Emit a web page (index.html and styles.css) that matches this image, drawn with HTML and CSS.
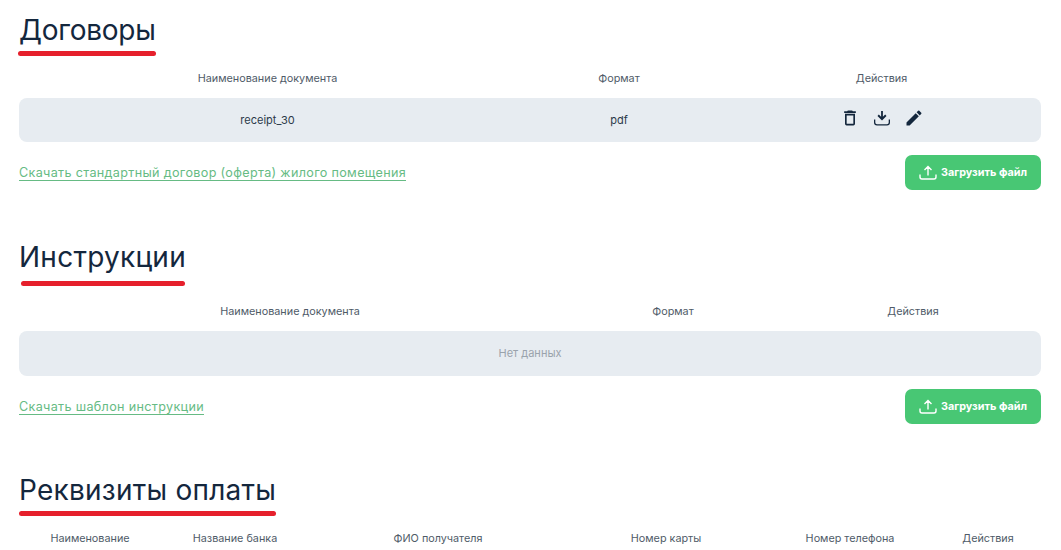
FILE: index.html
```html
<!DOCTYPE html>
<html lang="ru">
<head>
<meta charset="utf-8">
<title>Документы</title>
<link rel="stylesheet" href="styles.css">
</head>
<body>

<!-- договоры -->
<section class="block block-contracts">
  <h2 class="title title-contracts">Договоры<span class="title-line"></span></h2>
  <div class="grid grid-contracts head">
    <div>Наименование документа</div>
    <div>Формат</div>
    <div>Действия</div>
  </div>
  <div class="grid grid-contracts row">
    <div>receipt_30</div>
    <div>pdf</div>
    <div class="actions">
      <svg width="24" height="24" viewBox="-2.400 -2.400 28.800 28.800"><path d="M6 19a2 2 0 0 0 2 2h8a2 2 0 0 0 2-2V7H6v12zM8 9h8v10H8V9zm7.500-5-1-1h-5l-1 1H5v2h14V4h-3.500z"/></svg>
      <svg width="24" height="24" viewBox="0 0 24 24"><path d="M4 13.500v3a3 3 0 0 0 3 3h10a3 3 0 0 0 3-3v-3h-1.300v3a1.700 1.700 0 0 1-1.700 1.700H7a1.700 1.700 0 0 1-1.700-1.700v-3zM11.100 5v5.800L8.800 8.600 7.500 9.900l4.500 4.700 4.500-4.700-1.300-1.300-2.300 2.200V5z"/></svg>
      <svg width="24" height="24" viewBox="-2.400 -2.400 28.800 28.800"><path d="M3 17.250V21h3.750L17.810 9.940l-3.750-3.750L3 17.250zM20.710 7.040a1 1 0 0 0 0-1.410l-2.340-2.340a1 1 0 0 0-1.410 0l-1.830 1.830 3.750 3.750 1.830-1.830z"/></svg>
    </div>
  </div>
  <div class="bottom">
    <a class="link" href="#">Скачать стандартный договор (оферта) жилого помещения</a>
    <button class="btn">
      <svg width="18" height="18" viewBox="0 0 18 18"><path d="M1 10.500V13a2 2 0 0 0 2 2h12a2 2 0 0 0 2-2v-2.500M5.500 6 9 2.500 12.500 6M9 2.500v9"/></svg>
      Загрузить файл
    </button>
  </div>
</section>

<!-- инструкции -->
<section class="block block-manuals">
  <h2 class="title title-manuals">Инструкции<span class="title-line"></span></h2>
  <div class="grid grid-manuals head head-manuals">
    <div>Наименование документа</div>
    <div>Формат</div>
    <div>Действия</div>
  </div>
  <div class="row row-empty">Нет данных</div>
  <div class="bottom">
    <a class="link" href="#">Скачать шаблон инструкции</a>
    <button class="btn">
      <svg width="18" height="18" viewBox="0 0 18 18"><path d="M1 10.500V13a2 2 0 0 0 2 2h12a2 2 0 0 0 2-2v-2.500M5.500 6 9 2.500 12.500 6M9 2.500v9"/></svg>
      Загрузить файл
    </button>
  </div>
</section>

<!-- реквизиты -->
<section class="block block-payment">
  <h2 class="title title-payment">Реквизиты оплаты<span class="title-line"></span></h2>
  <div class="grid grid-payment head">
    <div>Наименование</div>
    <div>Название банка</div>
    <div>ФИО получателя</div>
    <div>Номер карты</div>
    <div>Номер телефона</div>
    <div>Действия</div>
  </div>
</section>

</body>
</html>
```

FILE: styles.css
```css
html, body { height: 100%; overflow: hidden; }
body {
  margin: 0;
  padding: 0 20px 0 19px;
  font-family: Inter, "Noto Sans", sans-serif;
  font-size: 11px;
  color: #14273d;
  background: #fff;
}

.block-contracts { padding-top: 13px; }
.block-manuals { margin-top: 50px; }
.block-payment { margin-top: 49px; }

.title {
  display: inline-block;
  margin: 0;
  font-size: 28px;
  font-weight: 400;
  line-height: 34px;
  color: #14273d;
}
.title-line {
  display: block;
  height: 5px;
  margin-top: 4px;
  border-radius: 3px;
  background: #e6202c;
}
.title-contracts { letter-spacing: -0.25px; }
.title-contracts .title-line { margin-left: -1px; }
.title-manuals { letter-spacing: 0.25px; }
.title-manuals .title-line { margin: 7px 1px 0 2px; }
.title-payment { letter-spacing: 0.25px; }

.grid { display: grid; text-align: center; align-items: center; }
.grid-contracts { grid-template-columns: 497px 206px 319px; }
.grid-manuals { grid-template-columns: 542px 224px 256px; }
.grid-payment { grid-template-columns: 142px 148px 258px 198px 170px 106px; }

.head {
  height: 42px;
  color: #4f5b68;
  font-size: 10.800px;
  padding-top: 2px;
  box-sizing: border-box;
}
.head-manuals { height: 45px; padding-top: 5px; }
.row {
  height: 44px;
  border-radius: 8px;
  background: #e7ecf1;
  color: #2c3a4a;
}
.row-empty {
  height: 45px;
  line-height: 45px;
  text-align: center;
  color: #9aa3ac;
}

.actions {
  display: flex;
  justify-content: center;
  gap: 8px;
  margin-top: -5px;
}
.actions svg { fill: #14273d; }

.bottom {
  display: flex;
  justify-content: space-between;
  align-items: center;
  margin-top: 13px;
}
.link {
  font-size: 12.600px;
  line-height: 15px;
  letter-spacing: 0.33px;
  color: #66bb84;
  text-decoration: none;
  border-bottom: 1px solid #66bb84;
}
.btn {
  display: flex;
  align-items: center;
  justify-content: center;
  gap: 4px;
  width: 136px;
  height: 35px;
  padding: 0;
  border: 0;
  border-radius: 7px;
  background: #48c774;
  color: #fff;
  font-family: inherit;
  font-size: 10.800px;
  font-weight: 700;
}
.btn svg { fill: none; stroke: #fff; stroke-width: 1.400; }
```
